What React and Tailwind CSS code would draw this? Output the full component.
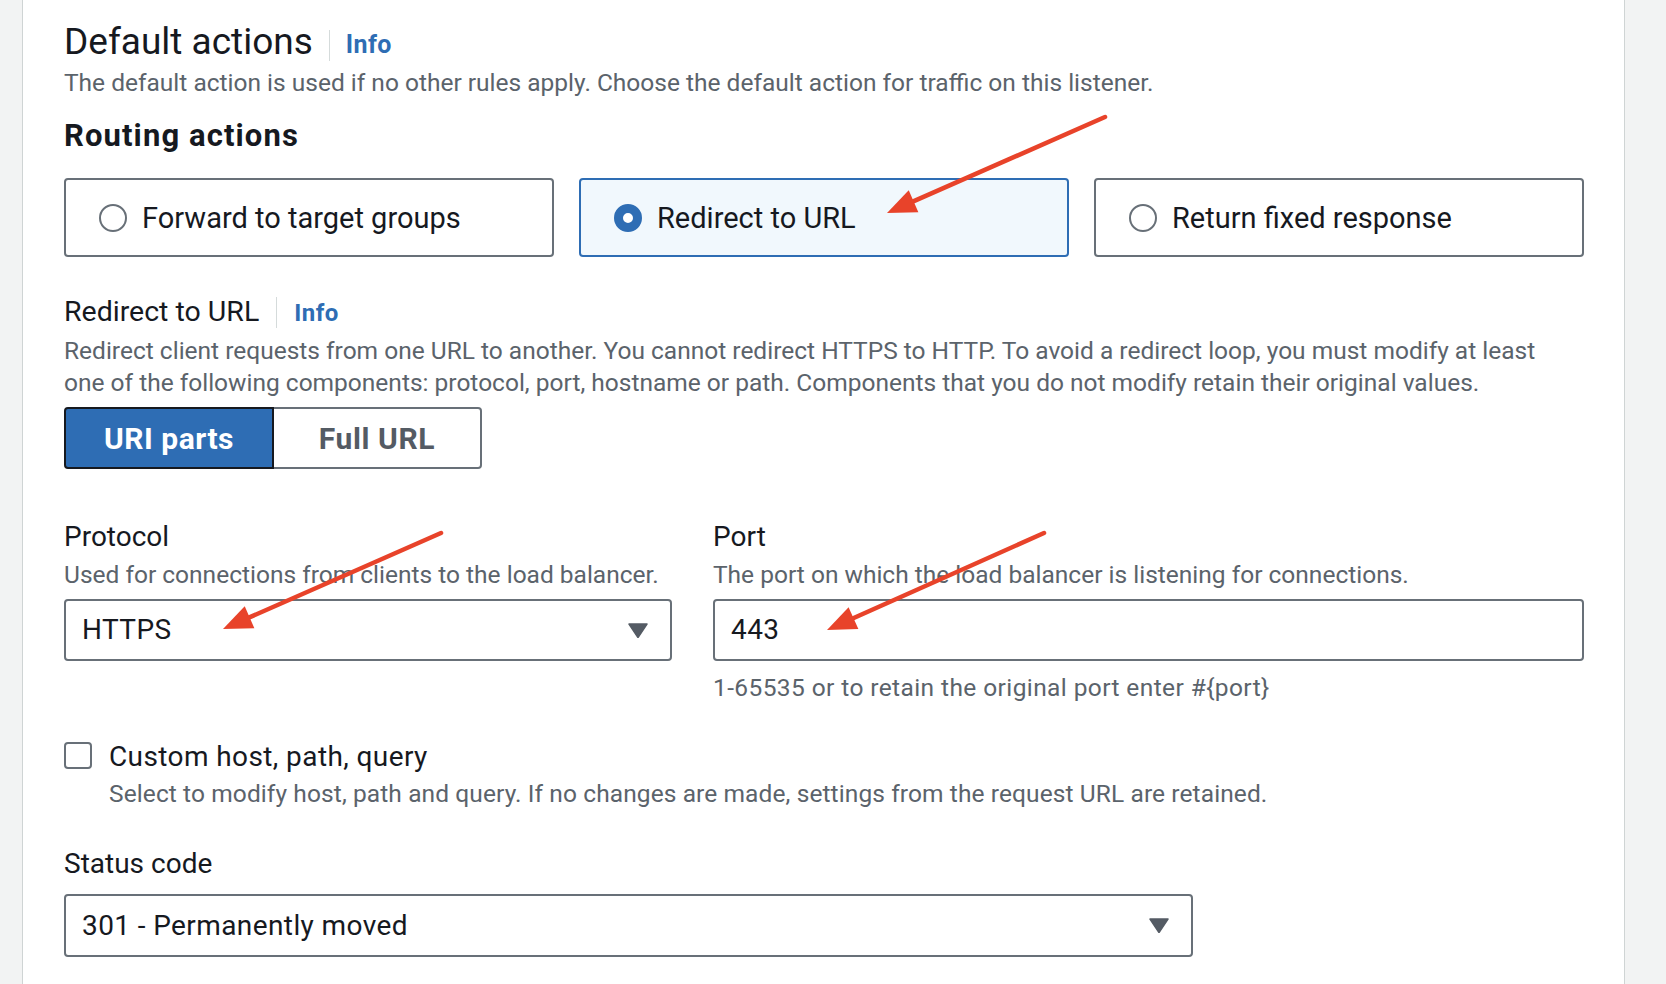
import React from "react";

function Radio({ checked }) {
  if (checked) {
    return (
      <span className="block w-[28px] h-[28px] shrink-0 rounded-full border-[9px] border-[#2e6db4] bg-white" />
    );
  }
  return (
    <span className="block w-[28px] h-[28px] shrink-0 rounded-full border-2 border-[#687078] bg-white" />
  );
}

function Tile({ label, checked }) {
  return (
    <div
      className={
        checked
          ? "flex items-center h-[79px] pl-[33px] gap-[15px] rounded-[4px] border-2 border-[#2e6db4] bg-[#f1f8fd]"
          : "flex items-center h-[79px] pl-[33px] gap-[15px] rounded-[4px] border-2 border-[#687078] bg-white"
      }
    >
      <Radio checked={checked} />
      <span className="text-[29px] leading-[36px] text-[#16191f]">{label}</span>
    </div>
  );
}

function Caret() {
  return (
    <svg width="20" height="15" viewBox="0 0 20 15" className="shrink-0">
      <polygon points="1,1 19,1 10,14.5" fill="#545b64" strokeLinejoin="round" stroke="#545b64" strokeWidth="1.5" />
    </svg>
  );
}

function Select({ value, className }) {
  return (
    <div
      className={
        "flex items-center justify-between h-[62px] pl-[16px] pr-[22px] rounded-[4px] border-2 border-[#687078] bg-white " +
        className
      }
    >
      <span className="text-[28px] leading-[34px] tracking-[0.4px] text-[#16191f]">{value}</span>
      <Caret />
    </div>
  );
}

function Arrow({ x1, y1, x2, y2 }) {
  const dx = x2 - x1;
  const dy = y2 - y1;
  const len = Math.sqrt(dx * dx + dy * dy);
  const ux = dx / len;
  const uy = dy / len;
  const bx = x2 - ux * 29;
  const by = y2 - uy * 29;
  const px = -uy * 12;
  const py = ux * 12;
  return (
    <g>
      <line x1={x1} y1={y1} x2={bx + ux * 4} y2={by + uy * 4} stroke="#e8432a" strokeWidth="4.5" strokeLinecap="round" />
      <polygon
        points={`${x2},${y2} ${bx + px},${by + py} ${bx - px},${by - py}`}
        fill="#e8432a"
      />
    </g>
  );
}

export default function App() {
  return (
    <div className="relative w-full min-h-[984px] overflow-hidden bg-[#f2f3f3] font-['Roboto',sans-serif]">
      <div className="ml-[22px] w-[1603px] min-h-[984px] bg-white border-x border-[#cfd4d4] pl-[41px] pr-[40px] pt-[20px]">
        {/* Default actions header */}
        <div className="flex items-center h-[44px]">
          <h2 className="text-[37px] leading-[44px] text-[#16191f]">Default actions</h2>
          <span className="ml-[16px] mt-[6px] w-px h-[31px] bg-[#d5dbdb]" />
          <a className="ml-[16px] mt-[6px] text-[25px] leading-[32px] tracking-[0.4px] font-bold text-[#2e6db4]">Info</a>
        </div>
        <p className="mt-[3px] text-[24.5px] leading-[32px] text-[#5b636b]">
          The default action is used if no other rules apply. Choose the default action for traffic on this listener.
        </p>

        <h3 className="mt-[19px] text-[31px] leading-[36px] tracking-[1.1px] font-bold text-[#16191f]">Routing actions</h3>

        <div className="mt-[24px] grid grid-cols-3 gap-[25px]">
          <Tile label="Forward to target groups" />
          <Tile label="Redirect to URL" checked />
          <Tile label="Return fixed response" />
        </div>

        {/* Redirect to URL */}
        <div className="mt-[37px] flex items-center h-[36px]">
          <span className="text-[28.5px] leading-[36px] text-[#16191f]">Redirect to URL</span>
          <span className="ml-[17px] w-px h-[31px] bg-[#d5dbdb]" />
          <a className="ml-[17px] mt-[2px] text-[24px] leading-[30px] tracking-[0.5px] font-bold text-[#2e6db4]">Info</a>
        </div>
        <p className="mt-[5px] text-[24.5px] leading-[32px] text-[#5b636b]">
          Redirect client requests from one URL to another. You cannot redirect HTTPS to HTTP. To avoid a redirect loop, you must modify at least
          <br />
          one of the following components: protocol, port, hostname or path. Components that you do not modify retain their original values.
        </p>

        <div className="mt-[8px] flex h-[62px]">
          <button className="w-[210px] h-full rounded-l-[4px] border-2 border-[#16191f] bg-[#2e6db4] text-[30px] tracking-[0.5px] font-bold text-white">
            URI parts
          </button>
          <button className="w-[208px] h-full rounded-r-[4px] border-2 border-l-0 border-[#687078] bg-white text-[30px] tracking-[0.6px] font-bold text-[#545b64]">
            Full URL
          </button>
        </div>

        {/* Protocol / Port */}
        <div className="mt-[51px] grid grid-cols-[608px_1fr] gap-x-[41px]">
          <div>
            <div className="text-[28px] leading-[34px] text-[#16191f]">Protocol</div>
            <div className="mt-[5px] text-[24.5px] leading-[32px] text-[#5b636b]">
              Used for connections from clients to the load balancer.
            </div>
            <Select value="HTTPS" className="mt-[8px]" />
          </div>
          <div>
            <div className="text-[28px] leading-[34px] text-[#16191f]">Port</div>
            <div className="mt-[5px] text-[24.5px] leading-[32px] text-[#5b636b]">
              The port on which the load balancer is listening for connections.
            </div>
            <div className="mt-[8px] flex items-center h-[62px] pl-[16px] rounded-[4px] border-2 border-[#687078] bg-white">
              <span className="text-[28px] leading-[34px] tracking-[0.4px] text-[#16191f]">443</span>
            </div>
            <div className="mt-[11px] text-[24.5px] leading-[32px] tracking-[0.4px] text-[#5b636b]">
              1-65535 or to retain the original port enter #&#123;port&#125;
            </div>
          </div>
        </div>

        {/* Custom host checkbox */}
        <div className="mt-[36px] flex items-start gap-[17px]">
          <span className="mt-[2px] block w-[28px] h-[27px] shrink-0 rounded-[4px] border-2 border-[#687078] bg-white" />
          <div>
            <div className="text-[28px] leading-[34px] tracking-[0.4px] text-[#16191f]">Custom host, path, query</div>
            <div className="mt-[4px] text-[24.5px] leading-[32px] tracking-[0.1px] text-[#5b636b]">
              Select to modify host, path and query. If no changes are made, settings from the request URL are retained.
            </div>
          </div>
        </div>

        {/* Status code */}
        <div className="mt-[37px] text-[28px] leading-[34px] text-[#16191f]">Status code</div>
        <Select value="301 - Permanently moved" className="mt-[13px] w-[1129px] h-[63px]" />
      </div>

      {/* annotation arrows */}
      <svg className="absolute inset-0 pointer-events-none" width="1666" height="984">
        <Arrow x1={1105} y1={117} x2={887} y2={213} />
        <Arrow x1={441} y1={533} x2={223} y2={629} />
        <Arrow x1={1044} y1={533} x2={827} y2={630} />
      </svg>
    </div>
  );
}
